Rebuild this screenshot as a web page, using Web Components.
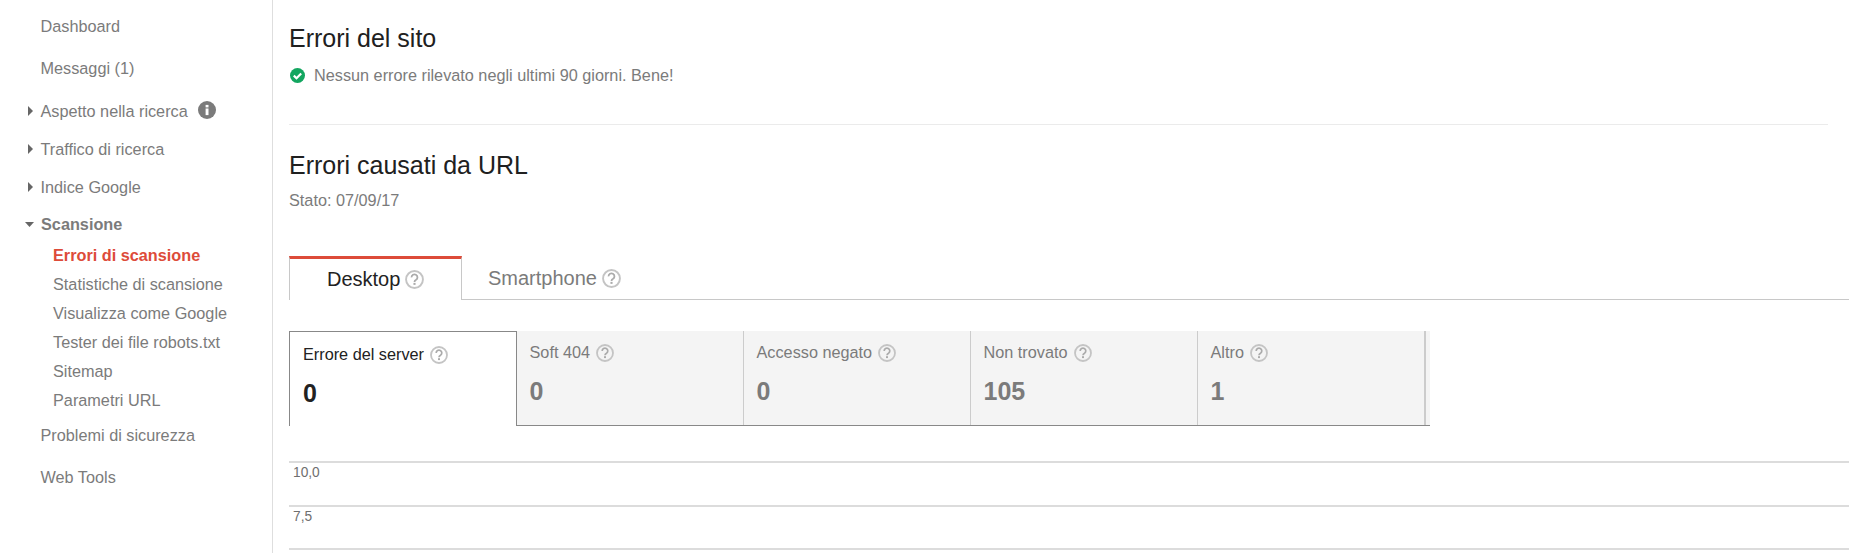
<!DOCTYPE html>
<html lang="it">
<head>
<meta charset="utf-8">
<title>Errori di scansione</title>
<style>
html, body { margin: 0; height: 100%; overflow: hidden; background: #fff; }
body { font-family: "Liberation Sans", Arial, sans-serif; color: #7b7b7b; }
</style>
</head>
<body>
<search-console>
  <side-nav slot="nav">
    <nav-item kind="link">Dashboard</nav-item>
    <nav-item kind="link">Messaggi (1)</nav-item>
    <nav-item kind="closed" style="margin-top:3px" info>Aspetto nella ricerca</nav-item>
    <nav-item kind="closed">Traffico di ricerca</nav-item>
    <nav-item kind="closed">Indice Google</nav-item>
    <nav-item kind="open">Scansione</nav-item>
    <nav-item kind="sub" active>Errori di scansione</nav-item>
    <nav-item kind="sub">Statistiche di scansione</nav-item>
    <nav-item kind="sub">Visualizza come Google</nav-item>
    <nav-item kind="sub">Tester dei file robots.txt</nav-item>
    <nav-item kind="sub">Sitemap</nav-item>
    <nav-item kind="sub">Parametri URL</nav-item>
    <nav-item kind="link" style="margin-top:-1px">Problemi di sicurezza</nav-item>
    <nav-item kind="link">Web Tools</nav-item>
  </side-nav>
  <site-errors></site-errors>
  <url-errors date="07/09/17">
    <device-tabs></device-tabs>
    <error-cards>
      <error-card label="Errore del server" value="0" selected></error-card>
      <error-card label="Soft 404" value="0"></error-card>
      <error-card label="Accesso negato" value="0"></error-card>
      <error-card label="Non trovato" value="105"></error-card>
      <error-card label="Altro" value="1"></error-card>
    </error-cards>
    <chart-grid></chart-grid>
  </url-errors>
</search-console>

<script>
class HelpIcon extends HTMLElement {
    connectedCallback(){
        if (this.shadowRoot) return;
        this.attachShadow({mode:"open"}).innerHTML = `
        <style>
        :host { display: inline-flex; width: var(--help-size, 18px); height: var(--help-size, 18px); }
        svg { width: 100%; height: 100%; display: block; }
        </style>
        <svg viewBox="0 0 18 18" fill="none">
            <circle cx="9" cy="9" r="8" stroke="#c4c4c4" stroke-width="1.8"/>
            <path d="M6.2 7a2.8 2.8 0 1 1 4.3 2.3c-1 .6-1.5 1-1.5 2" stroke="#ababab" stroke-width="1.7"/>
            <rect x="8" y="12.2" width="2" height="1.9" fill="#ababab"/>
        </svg>`;
    }
}
customElements.define("help-icon", HelpIcon);

class SearchConsole extends HTMLElement {
    constructor(){
        super();
        this.attachShadow({mode:"open"}).innerHTML = `
        <style>
        :host { display: flex; height: 100%; overflow: hidden; }
        aside { flex: 0 0 273px; box-sizing: border-box; border-right: 1px solid #dedede; }
        main { flex: 1; min-width: 0; padding: 0 0 0 16px; }
        </style>
        <aside><slot name="nav"></slot></aside>
        <main><slot></slot></main>`;
    }
}
customElements.define("search-console", SearchConsole);

class SideNav extends HTMLElement {
    constructor(){
        super();
        this.attachShadow({mode:"open"}).innerHTML = `
        <style>
        :host { display: block; padding-top: 5px; }
        </style>
        <slot></slot>`;
    }
}
customElements.define("side-nav", SideNav);

class NavItem extends HTMLElement {
    connectedCallback(){
        if (this.shadowRoot) return;
        const kind = this.getAttribute("kind");
        const arrow = kind === "closed"
            ? `<svg class="arrow" width="5" height="10" viewBox="0 0 5 10"><path d="M0 0l5 5-5 5z" fill="#666"/></svg>`
            : kind === "open"
            ? `<svg class="arrow down" width="9" height="5" viewBox="0 0 9 5"><path d="M0 0h9L4.5 5z" fill="#666"/></svg>`
            : "";
        const info = this.hasAttribute("info")
            ? `<svg class="info" width="18" height="18" viewBox="0 0 18 18"><circle cx="9" cy="9" r="9" fill="#7b7b7b"/><rect x="7.6" y="7.5" width="2.9" height="6.6" fill="#fff"/><rect x="7.6" y="3.9" width="2.9" height="2.5" fill="#fff"/></svg>`
            : "";
        this.attachShadow({mode:"open"}).innerHTML = `
        <style>
        :host { display: flex; align-items: center; position: relative; box-sizing: border-box; padding-left: 40.5px; height: 38px; font-size: 16.25px; color: #7b7b7b; white-space: nowrap; }
        :host([kind="link"]) { height: 42px; }
        :host([kind="open"]) { height: 35px; font-weight: bold; padding-left: 41px; padding-top: 2px; }
        :host([kind="sub"]) { height: 29px; padding-left: 53px; }
        :host([active]) { color: #dd4b39; font-weight: bold; }
        .arrow { position: absolute; left: 28px; top: 50%; margin-top: -5px; }
        .arrow.down { left: 25px; margin-top: -2px; }
        .info { margin-left: 10px; margin-top: -2px; }
        </style>
        ${arrow}<slot></slot>${info}`;
    }
}
customElements.define("nav-item", NavItem);

class SiteErrors extends HTMLElement {
    constructor(){
        super();
        this.attachShadow({mode:"open"}).innerHTML = `
        <style>
        :host { display: block; height: 125px; box-sizing: border-box; padding-top: 24px; border-bottom: 1px solid #ebebeb; margin-right: 21px; }
        h2 { margin: 0; font-size: 25px; font-weight: normal; line-height: 29px; color: #202020; }
        p { margin: 13px 0 0; display: flex; align-items: center; font-size: 16.25px; line-height: 19px; color: #7b7b7b; }
        svg { margin-left: 1px; margin-right: 9px; flex: none; }
        </style>
        <h2>Errori del sito</h2>
        <p><svg width="15" height="15" viewBox="0 0 15 15"><circle cx="7.5" cy="7.5" r="7.5" fill="#13a660"/><path d="M3.8 7.6l2.7 2.6 4.7-4.8" fill="none" stroke="#fff" stroke-width="2.2"/></svg>Nessun errore rilevato negli ultimi 90 giorni. Bene!</p>`;
    }
}
customElements.define("site-errors", SiteErrors);

class UrlErrors extends HTMLElement {
    connectedCallback(){
        if (this.shadowRoot) return;
        this.attachShadow({mode:"open"}).innerHTML = `
        <style>
        :host { display: block; padding-top: 26px; }
        h2 { margin: 0; font-size: 25px; font-weight: normal; line-height: 29px; color: #202020; }
        p { margin: 11px 0 0; font-size: 16.25px; line-height: 19px; color: #7b7b7b; }
        </style>
        <h2>Errori causati da URL</h2>
        <p>Stato: ${this.getAttribute("date")}</p>
        <slot></slot>`;
    }
}
customElements.define("url-errors", UrlErrors);

class DeviceTabs extends HTMLElement {
    constructor(){
        super();
        this.attachShadow({mode:"open"}).innerHTML = `
        <style>
        :host { display: flex; margin-top: 46px; height: 44px; box-sizing: border-box; border-bottom: 1px solid #c8c8c8; font-size: 20px; --help-size: 19px; }
        div { display: flex; align-items: center; gap: 5px; box-sizing: border-box; height: 44px; padding: 1px 0 0 37px; color: #7b7b7b; }
        .on { width: 173px; border: 1px solid #c8c8c8; border-top: 3px solid #dd4b39; border-bottom: 0; color: #222; background: #fff; padding-top: 0; }
        .off { padding-left: 26px; }
        </style>
        <div class="on">Desktop <help-icon></help-icon></div>
        <div class="off">Smartphone <help-icon></help-icon></div>`;
    }
}
customElements.define("device-tabs", DeviceTabs);

class ErrorCards extends HTMLElement {
    constructor(){
        super();
        this.attachShadow({mode:"open"}).innerHTML = `
        <style>
        :host { display: flex; width: 1141px; height: 95px; margin-top: 31px; position: relative; background: #f4f4f4; box-sizing: border-box; border-bottom: 1px solid #888; }
        i { flex: 1; border-left: 1px solid #ccc; }
        </style>
        <slot></slot><i></i>`;
    }
}
customElements.define("error-cards", ErrorCards);

class ErrorCard extends HTMLElement {
    connectedCallback(){
        if (this.shadowRoot) return;
        this.attachShadow({mode:"open"}).innerHTML = `
        <style>
        :host { display: block; flex: 0 0 227px; box-sizing: border-box; height: 94px; padding: 12px 0 0 12.5px; border-right: 1px solid #ccc; color: #7b7b7b; }
        :host(:first-child) { flex-basis: 228px; }
        :host([selected]) { background: #fff; color: #222; height: 95px; border: 1px solid #888; border-bottom: 0; padding: 13px 0 0 13px; }
        .label { display: flex; align-items: center; gap: 6px; font-size: 16.25px; line-height: 19px; height: 19px; }
        .value { font-size: 25px; font-weight: bold; line-height: 29px; margin-top: 15px; }
        </style>
        <div class="label"><span>${this.getAttribute("label")}</span><help-icon></help-icon></div>
        <div class="value">${this.getAttribute("value")}</div>`;
    }
}
customElements.define("error-card", ErrorCard);

class ChartGrid extends HTMLElement {
    constructor(){
        super();
        this.attachShadow({mode:"open"}).innerHTML = `
        <style>
        :host { display: block; margin-top: 35px; }
        div { box-sizing: border-box; height: 43.5px; border-top: 2px solid #dcdcdc; padding: 2px 0 0 4px; font-size: 13.75px; line-height: 16px; color: #6f6f6f; }
        </style>
        <div>10,0</div><div>7,5</div><div></div>`;
    }
}
customElements.define("chart-grid", ChartGrid);
</script>
</body>
</html>
